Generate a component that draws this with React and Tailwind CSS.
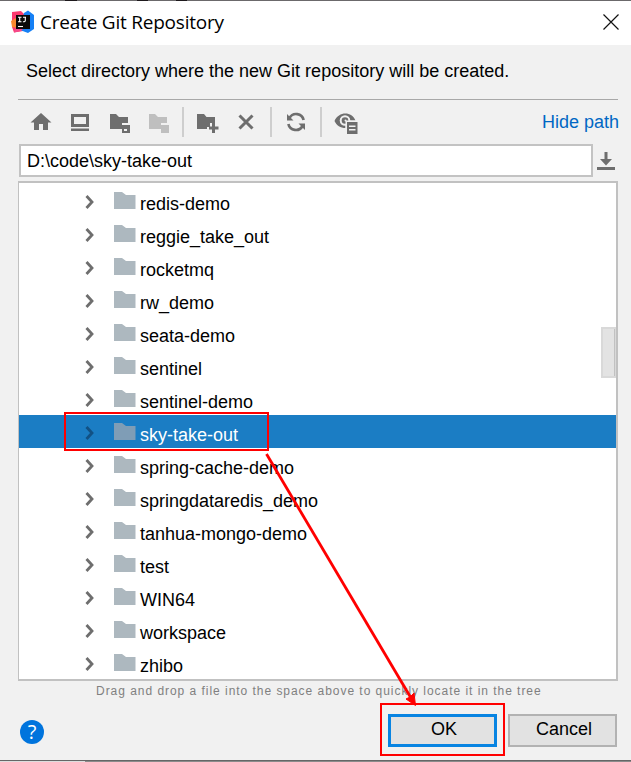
const sans = "font-['Liberation_Sans',Arial,sans-serif]";

const folders = [
  'redis-demo', 'reggie_take_out', 'rocketmq', 'rw_demo', 'seata-demo',
  'sentinel', 'sentinel-demo', 'sky-take-out', 'spring-cache-demo',
  'springdataredis_demo', 'tanhua-mongo-demo', 'test', 'WIN64', 'workspace', 'zhibo',
];

function Logo() {
  return (
    <svg width="24" height="24" viewBox="0 0 24 24" className="shrink-0">
      <path d="M1 2 L10 1 L14 5 L12 21 L3 22.5 L1 17 Z" fill="#fc3a6e" />
      <path d="M0 11 L5 8 L6 18 L1 17 Z" fill="#fb8a2e" />
      <path d="M13 3 L17 0.5 L23 5 V19 L17 23 L9 20 Z" fill="#1680f5" />
      <path d="M3 22.5 L4 18 L12 19 L10 21 Z" fill="#f54a8b" />
      <rect x="5" y="5" width="14" height="14" fill="#0b0808" />
      <path d="M7 7.300h3.500M8.700 7.300v4.400M7 11.700h3.500M12 7.300h3M14.300 7.300v3.200q0 1.400-2.400 1.200" stroke="#fff" strokeWidth="1.100" fill="none" />
      <path d="M7 16.500h5" stroke="#fff" strokeWidth="1.100" />
    </svg>
  );
}

function ToolIcon({ children, className = '' }) {
  return (
    <svg width="26" height="26" viewBox="0 0 26 26" fill="#6e6e6e" className={`shrink-0 ${className}`}>
      {children}
    </svg>
  );
}

function ModuleFolder({ faded }) {
  const color = faded ? '#bfbfbf' : '#6e6e6e';
  return (
    <ToolIcon className="ml-[13px]">
      <path d="M4 5h6l3 3h9v6h-6v6H4z" fill={color} />
      <path d="M17 16h7v8h-8v-8z" fill={color} />
      {!faded && <path d="M18 20h3v2h-3z" fill="#f2f2f2" />}
    </ToolIcon>
  );
}

function Toolbar() {
  return (
    <div className="flex h-[44px] items-center pl-[10px]">
      <ToolIcon>
        <path d="M13 4 L23.500 13.500 H20 V21 H15 V15 H11 V21 H6 V13.500 H2.500 Z" />
      </ToolIcon>
      <ToolIcon className="ml-[13px]">
        <path fillRule="evenodd" d="M4 5h18v13H4z M7 8v7h12V8z" />
        <path d="M4 19.500h18V22H4z" />
      </ToolIcon>
      <ModuleFolder />
      <ModuleFolder faded />
      <i className="ml-[11px] h-[30px] w-[2px] shrink-0 bg-[#cecece]" />
      <ToolIcon className="ml-[11px]">
        <path d="M2 5h7l2.500 3H20v6h-5v4h-3v2H2z" />
        <path d="M17 14h3v3.500h3.500v3H20V24h-3v-3.500h-3v-3h3z" />
      </ToolIcon>
      <ToolIcon className="ml-[12px]">
        <path d="M6.500 6.500 L19.500 19.500 M19.500 6.500 L6.500 19.500" stroke="#6e6e6e" strokeWidth="3" />
      </ToolIcon>
      <i className="ml-[11px] h-[30px] w-[2px] shrink-0 bg-[#cecece]" />
      <ToolIcon className="ml-[11px]">
        <path d="M6.500 9 A7.600 7.600 0 0 1 20.600 11 M19.500 17 A7.600 7.600 0 0 1 5.400 15" fill="none" stroke="#6e6e6e" strokeWidth="2.700" />
        <path d="M4 5v6.500h6.500z M22 21v-6.500h-6.500z" />
      </ToolIcon>
      <i className="ml-[11px] h-[30px] w-[2px] shrink-0 bg-[#cecece]" />
      <ToolIcon className="ml-[12px]">
        <path d="M0.500 12 C4.500 2 18 2 21.500 11.500 L11.500 11.500 V19 C6.500 19 2.500 16.500 0.500 12 Z" />
        <circle cx="11" cy="11.500" r="5.300" fill="#f1f1f1" />
        <circle cx="11" cy="11.500" r="3.300" />
        <circle cx="11.500" cy="11.500" r="1" fill="#f1f1f1" />
        <path d="M11.500 11.500H24V25H11.500z" fill="#f1f1f1" />
        <path fillRule="evenodd" d="M13 13H23.500V25H13z M15 16.500v1.500H21.500V16.500z M15 20v1.500H21.500V20z" />
      </ToolIcon>
      <a className="ml-auto mr-[-1px] whitespace-nowrap text-[18px] text-[#0067c4]">Hide path</a>
    </div>
  );
}

function Row({ name, selected }) {
  return (
    <div className={`flex h-[33px] pl-[66px] ${selected ? 'bg-[#1b7dc4] text-white' : ''}`}>
      <svg width="9" height="14" viewBox="0 0 9 14" className="mt-[11px] shrink-0">
        <path d="M1.500 1 L7 7 L1.500 13" fill="none" stroke={selected ? '#125184' : '#6e6e6e'} strokeWidth="2.800" />
      </svg>
      <svg width="22" height="18" viewBox="0 0 22 18" className="ml-[20px] mt-[8px] shrink-0">
        <path d="M0 0h8l4 3h9.500v14H0z" fill={selected ? '#7f9db6' : '#adb8bf'} />
      </svg>
      <span className="ml-[4px] mt-[4px] whitespace-nowrap text-[18px] leading-[33px]">{name}</span>
    </div>
  );
}

export default function App() {
  return (
    <div className={`relative flex h-[762px] w-[631px] flex-col overflow-hidden bg-[#f1f1f1] text-black ${sans}`}>
      <div className="flex h-[3px] shrink-0 flex-col bg-white">
        <div className="flex h-px bg-[#6b696b]">
          <i className="ml-[65px] h-px w-[12px] bg-[#1d191c]" />
          <i className="ml-[60px] h-px w-[11px] bg-[#1d191c]" />
          <i className="ml-[28px] h-px w-[11px] bg-[#1d191c]" />
        </div>
      </div>
      <header className="flex h-[42px] shrink-0 items-center bg-white pb-[4px] pl-[11px] pr-[12px]">
        <Logo />
        <h1 className="ml-[5px] whitespace-nowrap font-['Open_Sans','Noto_Sans',sans-serif] text-[19px] tracking-[-0.220px]">Create Git Repository</h1>
        <svg width="16" height="16" viewBox="0 0 16 16" className="ml-auto">
          <path d="M0.500 0.500 L15.500 15.500 M15.500 0.500 L0.500 15.500" stroke="#111" strokeWidth="1.200" />
        </svg>
      </header>
      <main className="flex flex-col pl-[18px] pr-[13px]">
        <p className="h-[55px] whitespace-nowrap border-b border-[#a8a8a8] pl-[8px] text-[18px] leading-[52px]">
          Select directory where the new Git repository will be created.
        </p>
        <Toolbar />
        <div className="flex h-[33px] items-center">
          <div className="ml-px h-[33px] w-[574px] whitespace-nowrap border-2 border-[#c3c3c3] bg-white pl-[6px] text-[18px] leading-[30px]">
            D:\code\sky-take-out
          </div>
          <svg width="18" height="18" viewBox="0 0 18 18" fill="#6e6e6e" className="ml-[4px] mt-px shrink-0">
            <path d="M7.500 0h3v7H15l-6 6.500L3 7h4.500z M0 15h18v3H0z" />
          </svg>
        </div>
        <section className="relative mt-[4px] h-[500px] overflow-hidden border-2 border-l border-[#c1c1c1] bg-white pt-px">
          {folders.map((name) => <Row key={name} name={name} selected={name === 'sky-take-out'} />)}
          <div className="absolute right-0 top-[144px] h-[51px] w-[15px] border-2 border-r border-[#d9d9d9] bg-[#e3e3e3]">
            <i className="ml-auto block h-full w-px bg-[#c1c1c1]" />
          </div>
        </section>
        <p className="h-[20px] whitespace-nowrap pl-[78px] text-[12px] leading-[20px] tracking-[0.965px] text-[#808080]">
          Drag and drop a file into the space above to quickly locate it in the tree
        </p>
      </main>
      <footer className="flex pl-[20px] pr-[14px] pt-[13px]">
        <button className="mt-[6px] flex h-[24px] w-[24px] items-center justify-center rounded-full bg-[#0074dd] font-['Open_Sans','Noto_Sans',sans-serif] text-[20px] leading-none text-white">?</button>
        <button className="ml-auto h-[33px] w-[109px] border-[3px] border-[#0884e2] bg-[#e2e2e2] pb-[2px] pl-[3px] text-[18px] leading-[25px]">OK</button>
        <button className="ml-[11px] h-[33px] w-[109px] border-2 border-[#b2b2b2] bg-[#e2e2e2] pb-[2px] pl-[3px] text-[18px] leading-[27px]">Cancel</button>
      </footer>
      <div className="mt-auto flex h-[2px] shrink-0 flex-col">
        <div className="h-px bg-[#666]" />
        <div className="flex h-px bg-[#8b8b8b]"><i className="h-px w-[85px] bg-[#ddd]" /></div>
      </div>
      <div className="absolute left-[64px] top-[412px] h-[39px] w-[205px] border-2 border-[#ff0000]" />
      <div className="absolute left-[380px] top-[703px] h-[53px] w-[125px] border-2 border-[#ff0000]" />
      <svg width="160" height="262" viewBox="260 448 160 262" className="absolute left-[260px] top-[448px]">
        <path d="M266.500 454 L411 698" stroke="#ff0000" strokeWidth="2.800" />
        <path d="M415.500 705.500 L406 699 L410 697 L414 693 Z" fill="#ff0000" stroke="#ff0000" />
      </svg>
    </div>
  );
}
